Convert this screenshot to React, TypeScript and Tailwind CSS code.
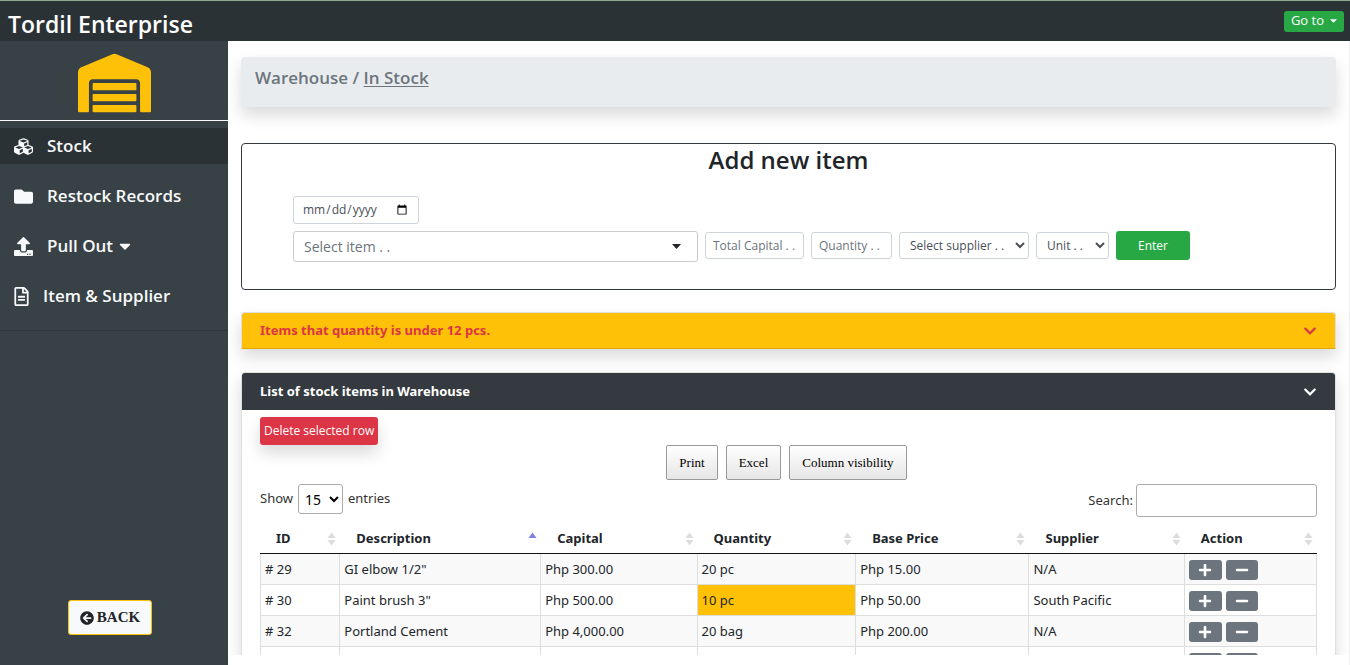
import React from "react";
import {
  FaArrowCircleLeft,
  FaCaretDown,
  FaChevronDown,
  FaCubes,
  FaFolder,
  FaMinus,
  FaPlus,
  FaRegFileAlt,
  FaUpload,
  FaWarehouse,
} from "react-icons/fa";

type Sort = "none" | "asc";

const columns: { label: string; width: string; sort: Sort }[] = [
  { label: "ID", width: "w-[7.6%]", sort: "none" },
  { label: "Description", width: "w-[19%]", sort: "asc" },
  { label: "Capital", width: "w-[14.8%]", sort: "none" },
  { label: "Quantity", width: "w-[15%]", sort: "none" },
  { label: "Base Price", width: "w-[16.4%]", sort: "none" },
  { label: "Supplier", width: "w-[14.7%]", sort: "none" },
  { label: "Action", width: "w-[12.5%]", sort: "none" },
];

const rows = [
  { id: "# 29", description: 'GI elbow 1/2"', capital: "Php 300.00", quantity: "20 pc", price: "Php 15.00", supplier: "N/A", low: false },
  { id: "# 30", description: 'Paint brush 3"', capital: "Php 500.00", quantity: "10 pc", price: "Php 50.00", supplier: "South Pacific", low: true },
  { id: "# 32", description: "Portland Cement", capital: "Php 4,000.00", quantity: "20 bag", price: "Php 200.00", supplier: "N/A", low: false },
  { id: "", description: "", capital: "", quantity: "", price: "", supplier: "", low: false },
];

function SortIcon({ sort }: { sort: Sort }) {
  return (
    <svg viewBox="0 0 9 14" className="h-[14px] w-[9px] shrink-0" aria-hidden="true">
      <path d="M4.5 0.5 L8.5 6 H0.5 Z" fill={sort === "asc" ? "#7d82e0" : "#dcdcdc"} />
      {sort === "none" && <path d="M4.5 13.5 L8.5 8 H0.5 Z" fill="#dcdcdc" />}
    </svg>
  );
}

function NavItem({ icon, label, active, caret }: { icon: React.ReactNode; label: string; active?: boolean; caret?: boolean }) {
  return (
    <a
      href="#"
      className={`flex h-9 items-center px-[14px] text-[17px] font-semibold text-[#f8f9fa] ${active ? "bg-[#2b3235]" : ""}`}
    >
      {icon}
      <span>{label}</span>
      {caret && <FaCaretDown className="ml-[3px] size-[18px]" />}
    </a>
  );
}

const field = "rounded-[3px] border border-[#ced4da] bg-white text-[#495057] placeholder:text-[#6c757d]";
const tableButton =
  "h-[35px] rounded-[2px] border border-[#999] bg-linear-to-b from-white to-[#e6e6e6] px-3 font-['Liberation_Serif',serif] text-[13px] text-black";
const actionButton = "flex h-5 items-center justify-center rounded-[3px] bg-[#6c757d] text-white";

export default function App() {
  return (
    <div className="flex h-screen flex-col overflow-hidden bg-white font-['Open_Sans',sans-serif] text-[#212529]">
      <header className="flex h-[41px] shrink-0 items-center justify-between border-t border-[#8fa890] bg-[#2b3235] pr-[6px] pl-2">
        <h1 className="pt-[6px] text-[23px] font-semibold text-white">Tordil Enterprise</h1>
        <button type="button" className="flex h-[21px] items-center gap-[6px] rounded-[3px] bg-[#28a745] px-[7px] text-[13px] text-white">
          Go to
          <svg viewBox="0 0 8 4" className="h-1 w-[7px]" aria-hidden="true">
            <path d="M0 0 H8 L4 4 Z" fill="currentColor" />
          </svg>
        </button>
      </header>

      <div className="flex min-h-0 flex-1">
        <aside className="flex w-[228px] shrink-0 flex-col bg-[#374146]">
          <div className="flex h-20 items-start justify-center border-b border-[#f8f9fa] pt-3">
            <FaWarehouse className="h-[60px] w-[73px] text-[#ffc107]" />
          </div>
          <nav className="mt-[7px] flex flex-col gap-[14px] border-b border-[#2f383d] pb-4">
            <NavItem active label="Stock" icon={<FaCubes className="mr-[14px] size-[19px]" />} />
            <NavItem label="Restock Records" icon={<FaFolder className="mr-[14px] size-[19px]" />} />
            <NavItem caret label="Pull Out" icon={<FaUpload className="mr-[14px] size-[19px]" />} />
            <NavItem label="Item & Supplier" icon={<FaRegFileAlt className="mr-[14px] h-[19px] w-[15px]" />} />
          </nav>
          <div className="mt-auto flex justify-center pr-2 pb-[30px]">
            <button
              type="button"
              className="flex h-[35px] w-[84px] items-center justify-center gap-[3px] rounded-[3px] border border-[#ffc107] bg-[#f8f9fa] font-['Liberation_Serif',serif] text-[15px] font-bold"
            >
              <FaArrowCircleLeft className="size-[14px]" />
              BACK
            </button>
          </div>
        </aside>

        <div className="flex min-w-0 flex-1 flex-col border-r border-[#eee] pb-[10px]">
          <main className="min-h-0 flex-1 overflow-hidden px-[13px] pt-4">
            <div className="h-[50px] rounded bg-[#e9ecef] px-[14px] pt-2 text-[17px] leading-[26px] font-semibold text-[#6c757d] shadow-[0_8px_16px_rgba(0,0,0,0.15)]">
              Warehouse /{" "}
              <a href="#" className="underline underline-offset-2">
                In Stock
              </a>
            </div>

            <section className="mt-9 h-[147px] rounded border border-[#343a40] pl-[51px]">
              <h2 className="-ml-[51px] text-center text-2xl leading-8 font-semibold">Add new item</h2>
              <form className="mt-5" onSubmit={(e) => e.preventDefault()}>
                <input type="date" aria-label="Date" className={`block h-7 w-[126px] px-2 text-xs ${field}`} />
                <div className="mt-[7px] flex items-start gap-[7px]">
                  <button
                    type="button"
                    aria-haspopup="listbox"
                    className="flex h-[31px] w-[405px] items-center justify-between rounded-[3px] border border-[#ccc] bg-white pr-4 pl-[10px] text-sm text-[#6c757d]"
                  >
                    Select item . .
                    <svg viewBox="0 0 9 5" className="h-[5px] w-[9px] text-[#212529]" aria-hidden="true">
                      <path d="M0 0 H9 L4.5 5 Z" fill="currentColor" />
                    </svg>
                  </button>
                  <div className="flex items-center gap-[7px]">
                    <input type="text" aria-label="Total capital" placeholder="Total Capital . ." className={`h-[27px] w-[99px] px-[7px] text-xs ${field}`} />
                    <input type="text" aria-label="Quantity" placeholder="Quantity . ." className={`h-[27px] w-[81px] px-[7px] text-xs ${field}`} />
                    <select aria-label="Supplier" className={`h-[27px] w-[130px] px-[6px] text-xs ${field}`}>
                      <option>Select supplier . .</option>
                    </select>
                    <select aria-label="Unit" className={`h-[27px] w-[73px] px-[6px] text-xs ${field}`}>
                      <option>Unit . .</option>
                    </select>
                    <button type="submit" className="h-[29px] w-[74px] rounded-[3px] bg-[#28a745] text-xs text-white">
                      Enter
                    </button>
                  </div>
                </div>
              </form>
            </section>

            <button
              type="button"
              className="mt-[22px] flex h-[37px] w-full items-center justify-between rounded-t border-x border-t border-b border-x-[#dfdfdf] border-t-[#dfdfdf] border-b-[#e0a800] bg-[#ffc107] px-[18px] font-['Noto_Sans',sans-serif] text-[13px] font-bold text-[#dc3545] shadow-[0_8px_16px_rgba(0,0,0,0.15)]"
            >
              Items that quantity is under 12 pcs.
              <FaChevronDown className="size-[14px]" />
            </button>

            <section className="mt-[23px] rounded-t border border-[#dfdfdf] shadow-[0_8px_16px_rgba(0,0,0,0.15)]">
              <button
                type="button"
                className="flex h-[37px] w-full items-center justify-between rounded-t-[3px] bg-[#343a40] px-[18px] font-['Noto_Sans',sans-serif] text-[13px] font-bold text-white"
              >
                List of stock items in Warehouse
                <FaChevronDown className="size-[14px]" />
              </button>

              <div className="px-[18px] pt-[7px] font-['Noto_Sans',sans-serif] text-[13px]">
                <button type="button" className="block h-7 rounded-[3px] bg-[#dc3545] px-1 font-['Open_Sans',sans-serif] text-xs text-white shadow-[0_8px_16px_rgba(0,0,0,0.15)]">
                  Delete selected row
                </button>

                <div className="flex justify-center gap-2 pr-1">
                  <button type="button" className={tableButton}>Print</button>
                  <button type="button" className={tableButton}>Excel</button>
                  <button type="button" className={tableButton}>Column visibility</button>
                </div>

                <div className="mt-1 flex items-start justify-between text-[#333]">
                  <label className="flex items-center gap-[5px]">
                    Show
                    <select className="h-[30px] w-[45px] rounded-[3px] border border-[#aaa] bg-transparent px-[2px] text-sm text-black">
                      <option>15</option>
                    </select>
                    entries
                  </label>
                  <label className="flex items-center gap-[3px]">
                    Search:
                    <input type="search" className="h-[33px] w-[181px] rounded-[3px] border border-[#aaa] px-1" />
                  </label>
                </div>

                <table className="mt-[6px] w-full table-fixed border-separate border-spacing-0">
                  <thead>
                    <tr className="h-[31px]">
                      {columns.map((c) => (
                        <th key={c.label} className={`border-b border-[#111] px-0 pt-[2px] pb-0 ${c.width}`}>
                          <div className="flex items-center justify-between pr-1 pl-4 font-bold">
                            {c.label}
                            <SortIcon sort={c.sort} />
                          </div>
                        </th>
                      ))}
                    </tr>
                  </thead>
                  <tbody className="[&_td]:h-[31px] [&_td]:border-r [&_td]:border-b [&_td]:border-[#ddd] [&_td]:px-1 [&_td]:pt-[1px] [&_td]:pb-0 [&_td:first-child]:border-l">
                    {rows.map((r, i) => (
                      <tr key={i} className={i % 2 === 0 ? "bg-[#f9f9f9]" : "bg-white"}>
                        <td>{r.id}</td>
                        <td>{r.description}</td>
                        <td>{r.capital}</td>
                        <td className={r.low ? "bg-[#ffc107]" : ""}>{r.quantity}</td>
                        <td>{r.price}</td>
                        <td>{r.supplier}</td>
                        <td>
                          <div className="flex gap-1">
                            <button type="button" aria-label="Add quantity" className={`w-[33px] ${actionButton}`}>
                              <FaPlus className="size-[14px]" />
                            </button>
                            <button type="button" aria-label="Remove quantity" className={`w-8 ${actionButton}`}>
                              <FaMinus className="size-[14px]" />
                            </button>
                          </div>
                        </td>
                      </tr>
                    ))}
                  </tbody>
                </table>
              </div>
            </section>
          </main>
        </div>
      </div>
    </div>
  );
}
